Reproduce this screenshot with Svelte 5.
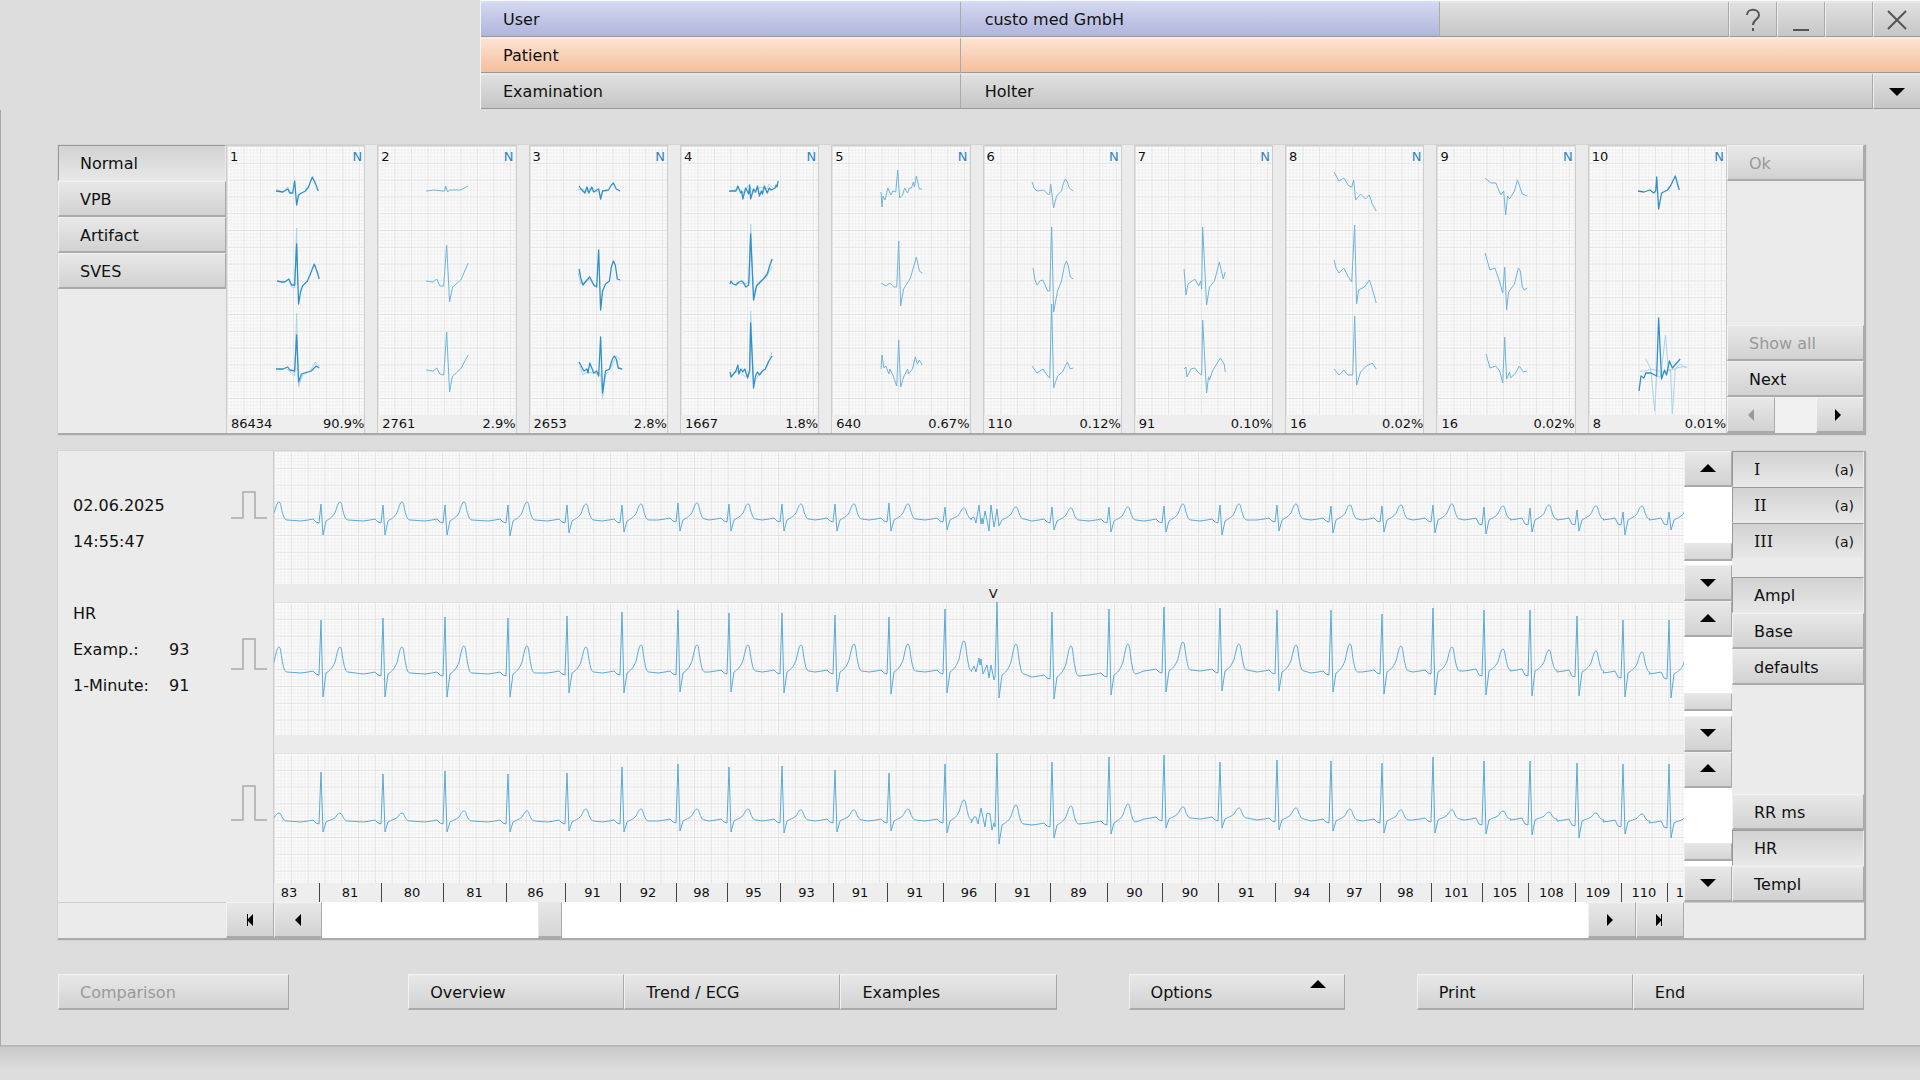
<script lang="ts">
  type Trace = { points: string, faint?: boolean }
  type Template = { count: string, share: string, strong?: boolean, traces: Trace[] }

  const classes = ["Normal", "VPB", "Artifact", "SVES"];
  let activeClass = $state("Normal");

  const templates: Template[] = [
    { count: "86434", share: "90.9%", strong: true, traces: [
      { points: "49,44 56,47 61,42 64,48", faint: true },
      { points: "49,46 56,47 61,44 63,48 66,48 68,36 70,60 72,50 75,48 79,46 82,42 86,32 89,38 92,46" },
      { points: "62,136 65,142 68,143 70,83 71,140", faint: true },
      { points: "50,136 55,137 58,137 62,134 65,140 68,140 70,99 72,159 74,147 76,141 81,136 84,129 88,119 91,127 93,134" },
      { points: "60,224 68,231 70,168 72,242 76,230 84,226 89,217 93,221", faint: true },
      { points: "49,224 56,224 61,222 63,225 68,226 70,190 72,237 75,229 78,228 85,226 90,221 93,223" },
    ] },
    { count: "2761", share: "2.9%", traces: [
      { points: "48,46 56,45 64,46 67,46 68,41 70,47 72,45 83,45 91,41" },
      { points: "48,136 55,137 59,134 62,141 66,141 69,100 72,157 75,142 80,138 84,134 87,127 91,118" },
      { points: "48,225 55,226 59,223 62,229 66,230 69,187 72,247 75,231 80,227 84,223 87,217 91,210" },
    ] },
    { count: "2653", share: "2.8%", strong: true, traces: [
      { points: "47,45 53,44 57,47 60,43 64,47 69,46", faint: true },
      { points: "49,41 51,44 55,48 57,42 59,48 62,42 64,47 67,45 69,44 71,54 73,46 79,45 82,40 84,38 87,44 91,46" },
      { points: "48,128 51,139 56,137 60,134 65,142", faint: true },
      { points: "49,124 51,134 53,140 57,135 60,132 64,140 67,142 69,105 71,165 73,146 76,139 80,136 82,122 84,116 86,120 88,134 91,135" },
      { points: "50,221 53,230 57,227 71,229 73,253 76,230 82,222 87,211 91,215", faint: true },
      { points: "49,217 54,226 57,224 58,228 60,218 64,228 67,226 69,231 71,192 73,248 76,226 80,224 83,214 85,211 87,214 89,223 93,224" },
    ] },
    { count: "1667", share: "1.8%", strong: true, traces: [
      { points: "48,46 58,44 62,48 68,40 74,48 80,42 86,44 89,39 93,43", faint: true },
      { points: "48,46 55,46 57,41 59,46 60,48 61,46 62,54 65,43 68,49 69,40 70,54 73,44 75,47 77,41 79,51 81,46 82,49 84,41 87,48 89,43 91,45 95,43 96,40 97,42 98,36" },
      { points: "55,138 64,139 69,137 70,79 73,150 77,138 86,132 92,121", faint: true },
      { points: "49,139 50,136 52,139 55,140 58,137 61,136 63,138 65,142 68,140 70,89 73,155 76,141 80,137 83,134 87,129 89,122 92,114" },
      { points: "49,231 57,226 65,232 69,228 70,166 73,238 78,230 86,223 92,207", faint: true },
      { points: "49,227 50,232 55,226 57,220 58,229 60,224 62,227 64,224 67,233 69,225 70,178 73,243 75,231 77,227 79,230 82,226 85,224 88,217 92,211" },
    ] },
    { count: "640", share: "0.67%", traces: [
      { points: "49,47 50,62 51,51 53,55 56,43 59,50 61,46 64,47 66,25 68,53 71,50 73,43 76,48 78,43 80,43 82,37 83,42 85,31 88,44 91,44" },
      { points: "49,138 54,141 58,138 62,142 65,142 67,96 69,161 72,144 79,133 85,112 88,126 91,128" },
      { points: "49,224 50,210 52,223 54,221 57,229 58,224 61,230 65,241 67,195 69,242 72,232 76,224 77,229 81,224 84,212 86,219 88,215 91,220" },
    ] },
    { count: "110", share: "0.12%", traces: [
      { points: "48,37 50,43 53,46 60,45 65,50 66,48 67,39 70,63 73,51 78,46 80,38 82,34 84,37 86,43 90,46" },
      { points: "49,123 51,135 53,140 56,136 59,135 64,146 66,146 68,82 70,167 74,146 78,136 81,121 83,116 85,121 87,132 90,134" },
      { points: "48,221 53,228 56,226 59,224 64,231 66,233 68,159 70,243 74,231 79,227 84,217 87,224 90,223" },
    ] },
    { count: "91", share: "0.10%", traces: [
      { points: "49,124 51,150 53,139 60,134 64,141 66,136 67,144 68,82 72,160 75,142 80,136 85,117 89,134 91,127" },
      { points: "49,224 51,222 52,232 56,224 60,223 64,228 67,230 68,175 72,248 74,232 75,235 78,226 86,213 90,219 91,227" },
    ] },
    { count: "16", share: "0.02%", traces: [
      { points: "48,27 53,36 58,33 63,41 66,42 68,35 70,55 75,49 80,54 84,50 87,59 91,66" },
      { points: "48,115 50,123 53,128 58,123 62,131 66,137 69,80 71,159 73,145 79,142 84,135 87,144 91,158" },
      { points: "48,224 53,230 58,225 62,230 67,230 69,171 71,240 75,227 81,221 87,218 91,224" },
    ] },
    { count: "16", share: "0.02%", traces: [
      { points: "48,33 54,38 59,38 64,50 67,46 69,70 71,51 73,54 78,46 81,35 86,49 91,51" },
      { points: "48,108 53,125 58,123 62,134 66,148 68,122 70,165 72,147 78,139 82,123 84,126 86,142 88,145 91,143" },
      { points: "49,209 53,223 59,221 63,226 66,238 68,192 70,234 73,227 74,233 79,228 83,221 87,227 91,226" },
    ] },
    { count: "8", share: "0.01%", strong: true, traces: [
      { points: "49,46 55,47 61,45 65,48 67,46 68,32 70,64 73,48 79,45 82,41 87,31 91,45" },
      { points: "51,226 57,226 62,224 66,266 68,231 72,232 77,190 80,226 92,222 99,222", faint: true },
      { points: "57,214 62,224 78,228 82,224 84,269 87,224 92,219 99,223", faint: true },
      { points: "50,246 52,231 55,233 57,228 62,228 68,231 70,173 73,234 76,225 78,230 81,216 84,223 92,214" },
    ] },
  ];

  // beat boundaries in strip units, the strip being 1410 wide
  const stripWidth = 1410;
  const ticks = [
    45, 107, 169, 232, 291, 346, 402, 453, 506, 559, 613, 669, 721, 776,
    833, 888, 944, 1001, 1055, 1106, 1157, 1208, 1254, 1301, 1347, 1393,
  ];
  const rates = [
    83, 81, 80, 81, 86, 91, 92, 98, 95, 93, 91, 91, 96, 91, 89,
    90, 90, 91, 94, 97, 98, 101, 105, 108, 109, 110, 1,
  ];
  const rateCells = rates.map((rate, i) => ({
    rate,
    width: (ticks[i] ?? stripWidth) - (ticks[i - 1] ?? 0),
  }));

  const leads = [
    {
      name: "I",
      height: 133,
      base: [69, 69, 69, 69, 69, 69, 68, 68, 68, 68, 68, 68, 68, 69, 69, 69, 69, 68, 68, 68, 68, 68, 68, 68, 68, 68],
      r: [53, 54, 54, 54, 54, 54, 52, 53, 53, 53, 52, 56, 58, 56, 56, 55, 54, 54, 55, 55, 54, 56, 57, 59, 61, 61],
      s: [84, 84, 84, 85, 82, 81, 80, 80, 80, 80, 80, 79, 75, 79, 81, 81, 84, 80, 82, 81, 82, 83, 81, 80, 84, 79],
      t: [51, 51, 51, 51, 53, 53, 52, 53, 53, 53, 53, 57, 56, 57, 56, 53, 53, 53, 54, 54, 53, 55, 54, 55, 55, 56],
      noise: "L696 68 L698 67 L700 66 L702 72 L705 54 L707 73 L708 67 L709 73 L711 60 L713 69 L715 80 L717 54 L720 76",
    },
    {
      name: "II",
      height: 133,
      base: [70, 71, 71, 71, 70, 70, 70, 69, 69, 69, 69, 69, 72, 74, 72, 68, 68, 69, 70, 69, 69, 68, 68, 69, 70, 71],
      r: [18, 16, 15, 16, 14, 10, 8, 11, 11, 13, 15, 7, 0, 10, 7, 5, 6, 8, 8, 12, 6, 8, 8, 14, 18, 18],
      s: [95, 95, 95, 95, 91, 91, 90, 90, 91, 90, 92, 91, 96, 97, 93, 90, 89, 89, 90, 92, 93, 93, 94, 94, 95, 96],
      t: [45, 45, 44, 44, 45, 43, 43, 43, 43, 42, 42, 39, 42, 44, 42, 40, 42, 43, 42, 44, 45, 47, 48, 49, 50, 52],
      noise: "L697 69 L698 68 L700 64 L702 70 L705 56 L706 63 L707 57 L709 72 L713 63 L715 76 L717 63 L720 78",
    },
    {
      name: "III",
      height: 130,
      base: [68, 68, 68, 68, 68, 68, 67, 67, 67, 67, 67, 67, 71, 71, 69, 65, 65, 66, 67, 67, 66, 66, 66, 67, 68, 69],
      r: [19, 21, 18, 21, 20, 14, 11, 14, 13, 17, 20, 11, 0, 9, 4, 2, 9, 7, 8, 10, 4, 8, 8, 10, 11, 11],
      s: [79, 79, 79, 79, 78, 79, 78, 79, 80, 79, 78, 80, 91, 85, 81, 75, 75, 77, 78, 80, 80, 81, 82, 85, 81, 85],
      t: [60, 60, 58, 58, 56, 56, 56, 56, 57, 57, 56, 47, 52, 53, 51, 54, 55, 55, 56, 57, 57, 58, 59, 60, 61, 62],
      noise: "L697 70 L700 64 L702 64 L704 71 L707 55 L711 74 L713 60 L716 61 L718 77 L720 70",
    },
  ];

  // slow rise after the beat, sharp peak at +19, steep fall
  function tWave(x: number, base: number, top: number) {
    const h = base - top;
    return `C${x + 8} ${base - 1} ${x + 11} ${base - h * 0.12} ${x + 14} ${base - h * 0.4}`
      + `C${x + 16} ${base - h * 0.7} ${x + 17} ${top} ${x + 19} ${top}`
      + `C${x + 21} ${top} ${x + 21} ${base - h * 0.6} ${x + 23} ${base - h * 0.3}`
      + `C${x + 24} ${base - h * 0.1} ${x + 25} ${base} ${x + 27} ${base}`;
  }

  function tracePath(lead: (typeof leads)[number]) {
    let d = `M-9 ${lead.base[0]}` + tWave(-14, lead.base[0], lead.t[0]);
    ticks.forEach((tick, i) => {
      const x = tick + 2;
      const b = lead.base[i];
      const q = i > 20 ? 6 : 3;
      if (i == 12) {
        d += lead.noise;
      } else {
        d += `L${x - 20} ${b + 1}L${x - 13} ${b}L${x - 8} ${b - 1}L${x - 5} ${b + q - 1}`;
      }
      d += `L${x - 2} ${b + q}L${x} ${lead.r[i]}L${x + 2} ${lead.s[i]}L${x + 5} ${b + 1}`;
      d += tWave(x, b, lead.t[i]);
    });
    return d;
  }

  const pulses = ["M0 66h12v-26h12v26h12", "M0 217h12v-30h12v30h12", "M0 368h12v-34h12v34h12"];
  let activeMode = $state("Ampl");
  let activeLabel = $state("HR");
  let position = $state(174);
</script>

{#snippet arrow(direction: string)}
  <svg class="arrow" width="16" height="16" viewBox="0 0 16 16" aria-hidden="true">
    {#if direction == "up"}
      <path d="M0 11L8 3L16 11z" />
    {:else if direction == "down"}
      <path d="M0 4H16L8 12z" />
    {:else if direction == "left"}
      <path d="M11 2V14L5 8z" />
    {:else if direction == "right"}
      <path d="M3 2V14L9 8z" />
    {:else if direction == "first"}
      <path d="M5 2h1v5l5-5v12l-5-5v5h-1z" />
    {:else}
      <path d="M10 2h-1v5l-5-5v12l5-5v5h1z" />
    {/if}
  </svg>
{/snippet}

<svelte:head>
  <title>Holter</title>
</svelte:head>

<svg class="defs" width="0" height="0" aria-hidden="true">
  <defs>
    <pattern id="paper" width="16.8" height="16.8" patternUnits="userSpaceOnUse">
      <rect width="16.8" height="16.8" fill="#fdfdfd" />
      <path d="M3.86 0V16.8M7.22 0V16.8M10.58 0V16.8M13.94 0V16.8M0 3.86H16.8M0 7.22H16.8M0 10.58H16.8M0 13.94H16.8" stroke="#efefef" />
      <path d="M.5 0V16.8M0 .5H16.8" stroke="#e2e2e2" />
    </pattern>
  </defs>
</svg>

<div class="page">
  <header>
    <div class="row">
      <div class="cell user">User</div>
      <div class="cell user">custo med GmbH</div>
      <div class="window-bar">
        <div class="cell"></div>
        <button aria-label="Help">
          <svg width="16" height="24" viewBox="0 0 16 24"><path d="M2 7C2 0 14 0 14 7C14 12 8 11 8 17M8 20v3" /></svg>
        </button>
        <button aria-label="Minimize">
          <svg width="16" height="24" viewBox="0 0 16 24"><path d="M0 22h16" /></svg>
        </button>
        <button aria-label="Restore"></button>
        <button aria-label="Close">
          <svg width="20" height="20" viewBox="0 0 20 20"><path d="M1 1L19 19M19 1L1 19" /></svg>
        </button>
      </div>
    </div>
    <div class="row">
      <div class="cell patient">Patient</div>
      <div class="cell patient wide"></div>
    </div>
    <div class="row">
      <div class="cell">Examination</div>
      <div class="cell wide">Holter</div>
      <button aria-label="Choose examination">{@render arrow("down")}</button>
    </div>
  </header>

  <main>
    <section class="panel templates">
      <nav>
        {#each classes as name}
          <button class="btn" class:pressed={activeClass == name} onclick={() => activeClass = name}>{name}</button>
        {/each}
      </nav>
      <div class="cards">
        {#each templates as template, i}
          <article class:strong={template.strong}>
            <div class="card-head"><span>{i + 1}</span><span class="type">N</span></div>
            <svg viewBox="0 0 140 269" preserveAspectRatio="none">
              <rect width="140" height="269" fill="url(#paper)" />
              <g transform="translate(1 -1)">
                {#each template.traces as trace}
                  <polyline class:faint={trace.faint} points={trace.points} />
                {/each}
              </g>
            </svg>
            <footer><span>{template.count}</span><span>{template.share}</span></footer>
          </article>
        {/each}
      </div>
      <div class="side">
        <button class="btn" disabled>Ok</button>
        <div class="spacer"></div>
        <button class="btn" disabled>Show all</button>
        <button class="btn">Next</button>
        <div class="pager">
          <button class="btn icon" disabled aria-label="Previous page">{@render arrow("left")}</button>
          <div class="spacer"></div>
          <button class="btn icon" aria-label="Next page">{@render arrow("right")}</button>
        </div>
      </div>
    </section>

    <section class="panel ecg">
      <div class="strip-row">
        <div class="info">
          <dl>
            <div><dt>02.06.2025</dt></div>
            <div><dt>14:55:47</dt></div>
            <div></div>
            <div><dt>HR</dt></div>
            <div><dt>Examp.:</dt><dd>93</dd></div>
            <div><dt>1-Minute:</dt><dd>91</dd></div>
          </dl>
          <svg class="pulses" width="36" height="451" viewBox="0 0 36 451">
            {#each pulses as pulse}
              <path d={pulse} />
            {/each}
          </svg>
        </div>

        <div class="strips">
          {#each leads as lead, i}
            {#if i > 0}
              <div class="band">{#if i == 1}<span class="marker">V</span>{/if}</div>
            {/if}
            <svg class="strip" viewBox="0 0 {stripWidth} {lead.height}" preserveAspectRatio="none" aria-label="Lead {lead.name}">
              <rect width={stripWidth} height={lead.height} fill="url(#paper)" />
              <path d={tracePath(lead)} />
            </svg>
          {/each}
          <div class="rates">
            {#each rateCells as cell}
              <span style="flex-grow: {cell.width}">{cell.rate}</span>
            {/each}
          </div>
        </div>

        <div class="scrollers">
          {#each leads as lead}
            <div class="scroller">
              <button class="btn icon" aria-label="Lead {lead.name} up">{@render arrow("up")}</button>
              <input type="range" min="0" max="100" value="92" aria-label="Lead {lead.name} position">
              <button class="btn icon" aria-label="Lead {lead.name} down">{@render arrow("down")}</button>
            </div>
          {/each}
        </div>

        <div class="side">
          {#each leads as lead}
            <button class="btn pressed lead"><span class="roman">{lead.name}</span><small>(a)</small></button>
          {/each}
          <div class="gap"></div>
          {#each ["Ampl", "Base", "defaults"] as name}
            <button class="btn" class:pressed={activeMode == name} onclick={() => activeMode = name}>{name}</button>
          {/each}
          <div class="spacer"></div>
          {#each ["RR ms", "HR", "Templ"] as name}
            <button class="btn" class:pressed={activeLabel == name} onclick={() => activeLabel = name}>{name}</button>
          {/each}
        </div>
      </div>

      <div class="timeline">
        <div class="blank start"></div>
        <button class="btn icon" aria-label="First">{@render arrow("first")}</button>
        <button class="btn icon" aria-label="Back">{@render arrow("left")}</button>
        <input type="range" min="0" max="1000" bind:value={position} aria-label="Time">
        <button class="btn icon" aria-label="Forward">{@render arrow("right")}</button>
        <button class="btn icon" aria-label="Last">{@render arrow("last")}</button>
        <div class="blank end"></div>
      </div>
    </section>

    <div class="actions">
      <button class="btn" disabled>Comparison</button>
      <div></div>
      <button class="btn">Overview</button>
      <button class="btn">Trend / ECG</button>
      <button class="btn">Examples</button>
      <div></div>
      <button class="btn options">Options {@render arrow("up")}</button>
      <div></div>
      <button class="btn">Print</button>
      <button class="btn">End</button>
    </div>
  </main>
  <div class="status"></div>
</div>

<style>
  :global(body) {
    background: #ddd;
  }

  .page {
    display: flex;
    flex-direction: column;
    min-height: 100vh;
    font: 16px/20px "DejaVu Sans", Verdana, sans-serif;
    color: #111;
  }

  .page, .page * {
    box-sizing: border-box;
  }

  .defs {
    position: absolute;
  }

  button {
    font: inherit;
    color: inherit;
    border-radius: 0;
    cursor: pointer;
  }

  header {
    margin-left: 25%;
    border-left: 1px solid #f4f4f4;
    border-top: 1px solid #f8f8f8;
  }

  .row {
    display: flex;
  }

  .cell, header button {
    height: 36px;
    border: 0;
    border-top: 2px solid #e8e8e8;
    border-bottom: 1px solid #999;
    background: linear-gradient(#e0e0e0, #c6c6c6);
  }

  .cell {
    flex: 0 0 calc(100% / 3);
    padding: 7px 22px;
    border-right: 1px solid #aaa;
  }

  .cell + .cell {
    padding-left: 24px;
  }

  .cell.wide {
    flex: 1;
  }

  .cell.user {
    background: linear-gradient(#d3d7f0, #b0b5dc);
    border-top-color: #d9dcf2;
  }

  .cell.patient {
    background: linear-gradient(#fde2d2, #f4bf9c);
    border-top-color: #fdeadf;
  }

  .cell.wide.patient {
    border-right: 0;
  }

  .window-bar {
    display: flex;
    flex: 1;
  }

  .window-bar .cell {
    flex: 1;
  }

  header button {
    display: grid;
    place-items: center;
    width: 48px;
    padding: 0;
    border-right: 1px solid #aaa;
    border-left: 1px solid #eee;
  }

  header button:last-child {
    width: 47px;
    border-right: 0;
  }

  .window-bar svg {
    fill: none;
    stroke: #555;
    stroke-width: 2;
  }

  main {
    display: flex;
    flex-direction: column;
    margin-top: 1px;
    padding: 35px 56px 35px 57px;
    border-left: 1px solid #a8a8a8;
    border-bottom: 2px solid #b8b8b8;
  }

  .status {
    flex: 1;
    min-height: 34px;
    background: linear-gradient(#cacaca, #ddd 24px);
  }

  .panel {
    background: #ebebeb;
    box-shadow: 1px 1px 1px 1px #aaa;
  }

  .btn {
    display: block;
    height: 36px;
    padding: 2px 21px 0;
    text-align: left;
    background: linear-gradient(#e8e8e8, #d2d2d2);
    border: 1px solid #f2f2f2;
    border-right-color: #aaa;
    border-bottom: 2px solid #aaa;
  }

  .btn.pressed {
    background: linear-gradient(#d2d2d2, #e8e8e8);
    border: 1px solid #ececec;
    border-top-color: #999;
    border-left-color: #999;
  }

  .btn:disabled {
    color: #999;
    cursor: default;
  }

  .btn.icon {
    display: grid;
    place-items: center;
    flex: none;
    width: 48px;
    padding: 0;
  }

  .arrow {
    display: block;
    fill: #000;
  }

  .btn:disabled .arrow {
    fill: #999;
  }

  .spacer {
    flex: 1;
  }

  .templates {
    display: flex;
    height: 288px;
  }

  nav {
    display: flex;
    flex-direction: column;
    width: 168px;
  }

  .cards {
    flex: 1;
    display: grid;
    grid-template-columns: repeat(10, 1fr);
    gap: 12px;
    font-size: 13px;
    line-height: 18px;
  }

  article {
    position: relative;
    display: flex;
    flex-direction: column;
    min-width: 0;
    border: 1px solid #ccc;
    border-bottom: 0;
  }

  article svg {
    display: block;
    width: 100%;
    height: 269px;
  }

  .card-head {
    position: absolute;
    inset: 2px 2px auto 3px;
    display: flex;
    justify-content: space-between;
  }

  .type {
    color: #2d86c4;
  }

  article footer {
    display: flex;
    justify-content: space-between;
    padding-left: 4px;
    background: #eee;
  }

  polyline {
    fill: none;
    stroke: #6db3da;
    stroke-width: 1;
    stroke-linejoin: round;
  }

  .strong polyline {
    stroke: #2e8fcb;
    stroke-width: 1.3;
  }

  .strong .faint {
    stroke: #a8d3ea;
    stroke-width: 1;
  }

  .side {
    display: flex;
    flex-direction: column;
  }

  .templates .side {
    width: 137px;
  }

  .pager {
    display: flex;
  }

  .pager .spacer {
    background: #f0f0f0;
  }

  .ecg {
    margin-top: 18px;
  }

  .strip-row {
    display: flex;
    height: 451px;
  }

  .info {
    display: flex;
    justify-content: space-between;
    width: 216px;
    padding-right: 6px;
    border-right: 1px solid #ccc;
  }

  dl {
    margin: 37px 0 0 15px;
  }

  dl div {
    display: flex;
    align-items: center;
    height: 36px;
  }

  dt {
    width: 96px;
  }

  dd {
    margin: 0;
  }

  .pulses {
    margin-top: 1px;
    fill: none;
    stroke: #aaa;
    stroke-width: 1.5;
  }

  .strips {
    flex: 1;
    display: flex;
    flex-direction: column;
    min-width: 0;
  }

  .strip {
    display: block;
    flex: 0 0 133px;
    width: 100%;
  }

  .strip:last-of-type {
    flex: 1;
    min-height: 0;
  }

  .strip path {
    fill: none;
    stroke: #5aaad6;
    stroke-linejoin: round;
  }

  .band {
    position: relative;
    flex: none;
    height: 18px;
    font-size: 13px;
    line-height: 20px;
  }

  .marker {
    position: absolute;
    left: 51%;
    transform: translateX(-50%);
  }

  .rates {
    display: flex;
    flex: none;
    height: 19px;
    font-size: 13px;
    line-height: 19px;
    text-align: center;
    background: #eee;
  }

  .rates span {
    flex: 0 0 0;
    min-width: 0;
    overflow: hidden;
  }

  .rates span + span {
    box-shadow: inset 1px 0 #444;
  }

  .rates span:first-child {
    text-indent: -15px;
  }

  .rates span:last-child {
    text-align: right;
  }

  .scrollers {
    display: flex;
    flex-direction: column;
    width: 48px;
  }

  .scroller {
    display: flex;
    flex-direction: column;
    flex: 1;
    min-height: 0;
  }

  input[type="range"] {
    appearance: none;
    flex: 1;
    min-width: 0;
    min-height: 0;
    margin: 0;
    background: #fff;
  }

  .scroller input {
    writing-mode: vertical-lr;
    width: 48px;
  }

  input::-webkit-slider-thumb {
    appearance: none;
    box-sizing: border-box;
    border: 1px solid #e8e8e8;
    border-right-color: #aaa;
    border-bottom: 2px solid #aaa;
    border-radius: 0;
    background: linear-gradient(#e6e6e6, #d6d6d6);
  }

  .scroller input::-webkit-slider-thumb {
    width: 48px;
    height: 18px;
  }

  .timeline input::-webkit-slider-thumb {
    width: 24px;
    height: 36px;
  }

  .ecg .side {
    width: 132px;
  }

  .gap {
    height: 18px;
  }

  .btn.lead {
    display: flex;
    align-items: center;
    justify-content: space-between;
    padding-right: 9px;
  }

  .roman {
    font-family: "DejaVu Serif", serif;
  }

  .lead small {
    font-size: 14px;
  }

  .timeline {
    display: flex;
    height: 36px;
  }

  .blank {
    border-top: 1px solid #ccc;
  }

  .blank.start {
    width: 168px;
  }

  .blank.end {
    width: 180px;
  }

  .actions {
    display: grid;
    grid-template-columns: 231fr 119fr 216fr 216fr 216fr 72fr 216fr 72fr 216fr 231fr;
    margin-top: 36px;
  }

  .actions .btn {
    white-space: nowrap;
  }

  .actions .options {
    display: flex;
    align-items: center;
    justify-content: space-between;
    padding-right: 18px;
  }

  .options .arrow {
    align-self: flex-start;
  }
</style>
